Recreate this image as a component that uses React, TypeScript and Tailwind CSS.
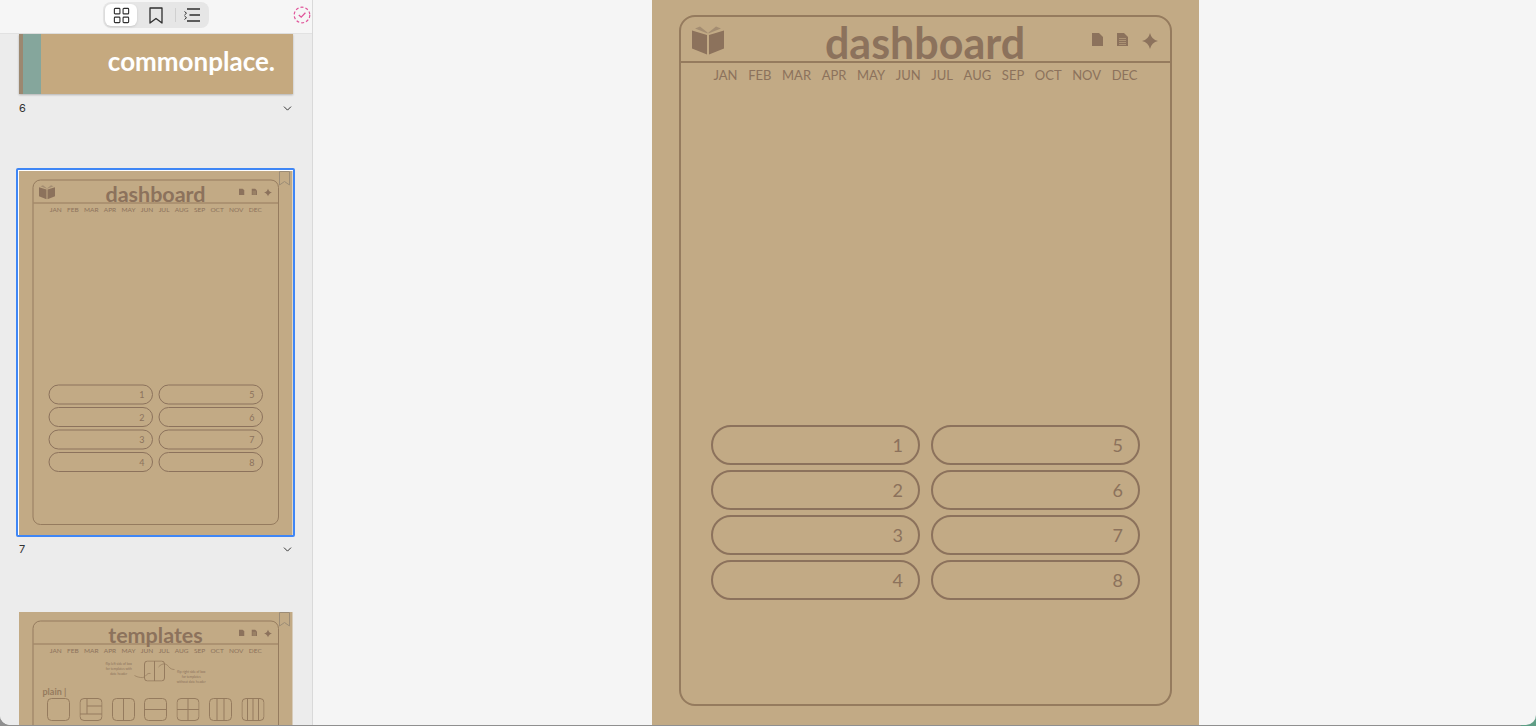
import { ChevronDown, LayoutGrid } from 'lucide-react'

const MONTHS = ['JAN', 'FEB', 'MAR', 'APR', 'MAY', 'JUN', 'JUL', 'AUG', 'SEP', 'OCT', 'NOV', 'DEC']
const LEFT_SLOTS = [1, 2, 3, 4]
const RIGHT_SLOTS = [5, 6, 7, 8]

function BookIcon() {
  return (
    <svg width="32" height="29" viewBox="0 0 32 29" fill="#8c725c">
      <path d="M0 4.5 L15 9 V28.5 L0 22.5 Z" />
      <path d="M17 9 L32 4.5 V22.5 L17 28.5 Z" />
      <path d="M3 2.5 L8 0.5 L15.5 6.5 V7.5 Z" fill="#a48d72" />
      <path d="M16.5 7.5 V6.5 L24 0.5 L29 2.5 Z" fill="#a48d72" />
    </svg>
  )
}

function PageIcons() {
  return (
    <div className="flex items-start gap-[14px]">
      <svg width="11" height="13" viewBox="0 0 11 13" fill="#8c725c">
        <path d="M0 0 H7 L11 4 V13 H0 Z" />
      </svg>
      <svg width="11" height="13" viewBox="0 0 11 13" fill="#8c725c">
        <path d="M0 0 H7 L11 4 V13 H0 Z" />
        <path d="M2 5.5 H9 M2 7.5 H9 M2 9.5 H9 M2 11.5 H9" stroke="#c2aa85" strokeWidth="0.6" />
      </svg>
      <svg width="16" height="16" viewBox="0 0 16 16" fill="#8c725c">
        <path d="M8 0 Q9.5 6.5 16 8 Q9.5 9.5 8 16 Q6.5 9.5 0 8 Q6.5 6.5 8 0 Z" />
      </svg>
    </div>
  )
}

function Slot({ n }: { n: number }) {
  return (
    <div className="h-10 rounded-[20px] border-2 border-[#8c725c] flex items-center justify-end pr-[15px] text-[18px] text-[#8c725c]">
      {n}
    </div>
  )
}

function MonthRow() {
  return (
    <div className="flex justify-center gap-[10.6px] pt-[4px] text-[13px] leading-[17px] text-[#8c725c]">
      {MONTHS.map(m => <span key={m}>{m}</span>)}
    </div>
  )
}

function PageHeader({ title, book }: { title: string; book?: boolean }) {
  return (
    <div className="h-[46px] border-b-2 border-[#957b5e] grid grid-cols-[1fr_auto_1fr] pl-[11px] pr-[12px]">
      <div className="mt-[9px]">{book && <BookIcon />}</div>
      <span className="mt-[4px] text-[43px] leading-[44px] font-bold text-[#8c725c]">{title}</span>
      <div className="mt-[16px] flex justify-end"><PageIcons /></div>
    </div>
  )
}

function DashboardPage() {
  return (
    <div className="w-[547px] h-[732px] bg-[#c2aa85] pt-[17px] px-[27px] font-['Lato',sans-serif]">
      <div className="h-[691px] border-2 border-[#957b5e] rounded-[16px] flex flex-col">
        <PageHeader title="dashboard" book />
        <MonthRow />
        <div className="grid grid-cols-2 gap-x-[11px] px-[30px] mt-[341px]">
          <div className="flex flex-col gap-[5px]">
            {LEFT_SLOTS.map(n => <Slot key={n} n={n} />)}
          </div>
          <div className="flex flex-col gap-[5px]">
            {RIGHT_SLOTS.map(n => <Slot key={n} n={n} />)}
          </div>
        </div>
      </div>
    </div>
  )
}

function TemplateBox({ children }: { children?: React.ReactNode }) {
  return (
    <svg width="46" height="46" viewBox="0 0 46 46" fill="none" stroke="#957b5e" strokeWidth="2">
      <rect x="1" y="1" width="44" height="44" rx="8" />
      {children}
    </svg>
  )
}

function TemplatesPage() {
  return (
    <div className="w-[547px] h-[300px] overflow-hidden bg-[#c2aa85] pt-[17px] px-[27px] font-['Lato',sans-serif]">
      <div className="h-[400px] border-2 border-[#957b5e] rounded-[16px] flex flex-col">
        <PageHeader title="templates" />
        <MonthRow />
        <div className="flex justify-center items-start gap-[2px] mt-[11px] text-[6.5px] leading-[10px] text-center text-[#8c725c]">
          <span className="w-[54px] mt-[2px]">flip left side of box for templates with date header</span>
          <svg width="84" height="42" viewBox="0 0 84 42" fill="none" stroke="#957b5e" strokeWidth="2">
            <rect x="22" y="1" width="40" height="40" rx="6" />
            <path d="M42 1 V41" />
            <path d="M34 26 C24 24 26 36 14 34 C8 33 6 32 2 30" strokeWidth="1.4" />
            <path d="M50 13 C58 4 66 6 70 12 C74 17 78 18 82 18" strokeWidth="1.4" />
          </svg>
          <span className="w-[60px] mt-[18px]">flip right side of box for templates without date header</span>
        </div>
        <div className="pl-[18px] mt-[2px] text-[18px] leading-[24px] font-bold text-[#957b5e]">plain |</div>
        <div className="flex justify-between px-[27px] mt-[1px]">
          <TemplateBox />
          <TemplateBox><path d="M15 1 V32 M1 32 H45 M15 16 H45" /></TemplateBox>
          <TemplateBox><path d="M23 1 V45" /></TemplateBox>
          <TemplateBox><path d="M1 23 H45" /></TemplateBox>
          <TemplateBox><path d="M23 1 V45 M1 23 H45" /></TemplateBox>
          <TemplateBox><path d="M16 1 V45 M30 1 V45" /></TemplateBox>
          <TemplateBox><path d="M12 1 V45 M23 1 V45 M34 1 V45" /></TemplateBox>
        </div>
      </div>
    </div>
  )
}

function SelectedBadge() {
  return (
    <svg width="18" height="18" viewBox="0 0 18 18" fill="none" stroke="#e0559b" strokeWidth="1.2">
      <circle cx="9" cy="9" r="7.8" strokeDasharray="3 2" />
      <path d="M5.8 9 L8.2 11.2 L12.4 6.8" strokeWidth="1.3" />
    </svg>
  )
}

function ToolbarBookmark() {
  return (
    <svg width="14" height="17" viewBox="0 0 14 17" fill="none" stroke="#2f2f2f" strokeWidth="1.3" strokeLinejoin="round">
      <path d="M1 1 H13 V16 L7 11.5 L1 16 Z" />
    </svg>
  )
}

function ToolbarOutline() {
  return (
    <svg width="16" height="14" viewBox="0 0 16 14" fill="none" stroke="#2f2f2f" strokeWidth="1.3">
      <path d="M3 1 H16 M5.5 7 H16 M3 13 H16" />
      <path d="M0.5 3.5 L2.5 5.2 L0.5 7 M0.5 8 L2.5 9.7 L0.5 11.5" strokeWidth="1" />
    </svg>
  )
}

function CornerBookmark() {
  return (
    <svg width="11" height="15" viewBox="0 0 11 15" fill="none" stroke="#9c8c76" strokeWidth="1">
      <path d="M0.5 0.5 H10.5 V14 L5.5 10.5 L0.5 14 Z" />
    </svg>
  )
}

export default function App() {
  return (
    <div className="h-[726px] w-full overflow-hidden bg-[linear-gradient(90deg,#8f8f8f_99%,#5f9d85_99%)]">
      <div className="h-[725px] w-full flex overflow-hidden rounded-b-[10px] bg-[#f5f5f5] font-['Inter',sans-serif]">
        {/* Thumbnail rail */}
        <aside className="w-[313px] h-full shrink-0 flex flex-col bg-[#ececec] border-r border-[#d9d9d9] overflow-hidden">
          <div className="h-[34px] shrink-0 bg-[#f6f6f6] border-b border-[#e2e2e2] flex items-start justify-between pt-[2px] pr-[1px]">
            <div className="ml-[103px] h-[26px] w-[106px] rounded-[8px] bg-[#e6e6e6] flex items-center p-[2px]">
              <div className="w-[32px] h-[22px] rounded-[6px] bg-white shadow-sm flex items-center justify-center">
                <LayoutGrid size={19} strokeWidth={1.4} className="text-[#2f2f2f]" />
              </div>
              <div className="w-[38px] flex justify-center"><ToolbarBookmark /></div>
              <div className="w-px h-[14px] bg-[#d0d0d0]" />
              <div className="flex-1 flex justify-center"><ToolbarOutline /></div>
            </div>
            <div className="mt-[4px]"><SelectedBadge /></div>
          </div>

          {/* page 6 */}
          <div className="pl-[19px] w-[293px] shrink-0">
            <div className="h-[60px] bg-[#c5a97f] shadow-[0_1px_2px_rgba(0,0,0,0.25)] flex items-stretch">
              <div className="w-[4px] bg-[#9c8870]" />
              <div className="w-[18px] bg-[#85a69c]" />
              <div className="flex-1 text-right pr-[18px] pt-[11px] text-[26px] leading-[32px] font-bold text-white font-['Lato',sans-serif]">commonplace.</div>
            </div>
          </div>
          <div className="h-[29px] shrink-0 flex items-center justify-between pl-[19px] pr-[18px] text-[11px] text-[#333]">
            <span>6</span>
            <ChevronDown size={13} strokeWidth={1.8} />
          </div>

          {/* page 7, selected */}
          <div className="ml-[16px] mt-[45px] w-[279px] h-[369px] shrink-0 border-2 border-[#3f86f5] rounded-[2px] p-[1px] bg-white overflow-hidden">
            <div className="w-[273.5px] h-[366px] overflow-hidden relative">
              <div className="origin-top-left scale-50"><DashboardPage /></div>
              <div className="absolute right-[3px] top-0"><CornerBookmark /></div>
            </div>
          </div>
          <div className="h-[25px] shrink-0 flex items-center justify-between pl-[19px] pr-[18px] text-[11px] text-[#333]">
            <span>7</span>
            <ChevronDown size={13} strokeWidth={1.8} />
          </div>

          {/* page 8 */}
          <div className="ml-[19px] mt-[50px] w-[274px] shrink-0 relative">
            <div className="origin-top-left scale-50 h-[150px]"><TemplatesPage /></div>
            <div className="absolute right-[3px] top-0"><CornerBookmark /></div>
          </div>
        </aside>

        {/* Main page view */}
        <main className="flex-1 flex justify-center">
          <div className="ml-[2px] h-[725px] overflow-hidden">
            <div className="-mt-[2px]"><DashboardPage /></div>
          </div>
        </main>
      </div>
    </div>
  )
}
